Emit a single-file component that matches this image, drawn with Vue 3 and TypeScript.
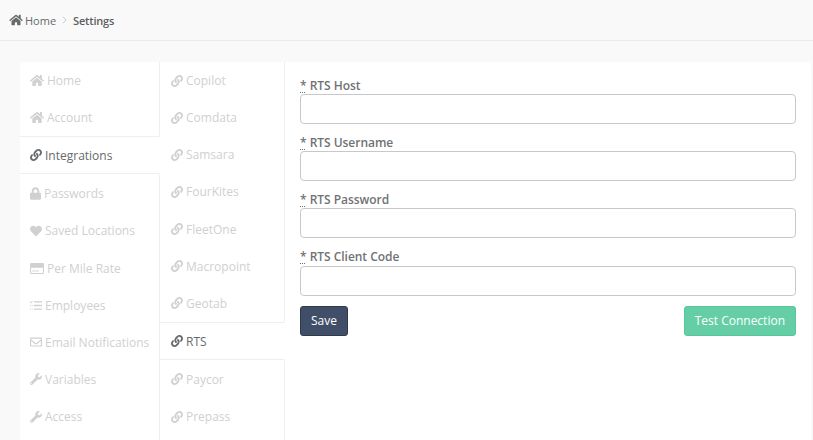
<script setup lang="ts">
type IconName = 'home' | 'link' | 'lock' | 'heart' | 'card' | 'tasks' | 'envelope' | 'wrench'
interface Tab { label: string; icon: IconName; active?: boolean }

const icons: Record<IconName, { box: string; d: string }> = {
  home: { box: '0 0 576 512', d: 'M280.37 148.26L96 300.11V464a16 16 0 0 0 16 16l112.06-.29a16 16 0 0 0 15.92-16V368a16 16 0 0 1 16-16h64a16 16 0 0 1 16 16v95.64a16 16 0 0 0 16 16.05L464 480a16 16 0 0 0 16-16V300L295.67 148.26a12.19 12.19 0 0 0-15.3 0zM571.6 251.47L488 182.56V44.05a12 12 0 0 0-12-12h-56a12 12 0 0 0-12 12v72.61L318.47 43a48 48 0 0 0-61 0L4.34 251.47a12 12 0 0 0-1.6 16.9l25.5 31A12 12 0 0 0 45.15 301l235.22-193.74a12.19 12.19 0 0 1 15.3 0L530.9 301a12 12 0 0 0 16.9-1.6l25.5-31a12 12 0 0 0-1.7-16.93z' },
  link: { box: '0 0 512 512', d: 'M326.612 185.391c59.747 59.809 58.927 155.698.36 214.59-.11.12-.24.25-.36.37l-67.2 67.2c-59.27 59.27-155.699 59.262-214.96 0-59.27-59.26-59.27-155.7 0-214.96l37.106-37.106c9.84-9.84 26.786-3.3 27.294 10.606.648 17.722 3.826 35.527 9.69 52.721 1.986 5.822.567 12.262-3.783 16.612l-13.087 13.087c-28.026 28.026-28.905 73.66-1.155 101.96 28.024 28.579 74.086 28.749 102.325.51l67.2-67.19c28.191-28.191 28.073-73.757 0-101.83-3.701-3.694-7.429-6.564-10.341-8.569a16.037 16.037 0 0 1-6.947-12.606c-.396-10.567 3.348-21.456 11.698-29.806l21.054-21.055c5.521-5.521 14.182-6.199 20.584-1.731a152.482 152.482 0 0 1 20.522 17.197zM467.547 44.449c-59.261-59.262-155.69-59.27-214.96 0l-67.2 67.2c-.12.12-.25.25-.36.37-58.566 58.892-59.387 154.781.36 214.59a152.454 152.454 0 0 0 20.521 17.196c6.402 4.468 15.064 3.789 20.584-1.731l21.054-21.055c8.35-8.35 12.094-19.239 11.698-29.806a16.037 16.037 0 0 0-6.947-12.606c-2.912-2.005-6.64-4.875-10.341-8.569-28.073-28.073-28.191-73.639 0-101.83l67.2-67.19c28.239-28.239 74.3-28.069 102.325.51 27.75 28.3 26.872 73.934-1.155 101.96l-13.087 13.087c-4.35 4.35-5.769 10.79-3.783 16.612 5.864 17.194 9.042 34.999 9.69 52.721.509 13.906 17.454 20.446 27.294 10.606l37.106-37.106c59.271-59.259 59.271-155.699.001-214.959z' },
  lock: { box: '0 0 448 512', d: 'M400 224h-24v-72C376 68.2 307.8 0 224 0S72 68.2 72 152v72H48c-26.5 0-48 21.5-48 48v192c0 26.5 21.5 48 48 48h352c26.5 0 48-21.5 48-48V272c0-26.5-21.5-48-48-48zm-104 0H152v-72c0-39.7 32.3-72 72-72s72 32.3 72 72v72z' },
  heart: { box: '0 0 512 512', d: 'M462.3 62.6C407.5 15.9 326 24.3 275.7 76.2L256 96.5l-19.7-20.3C186.1 24.3 104.5 15.9 49.7 62.6c-62.8 53.6-66.1 149.8-9.9 207.9l193.5 199.8c12.5 12.9 32.8 12.9 45.3 0l193.5-199.8c56.3-58.1 53-154.3-9.8-207.9z' },
  card: { box: '0 0 576 512', d: 'M48 32C21.5 32 0 53.5 0 80v352c0 26.5 21.5 48 48 48h480c26.5 0 48-21.5 48-48V80c0-26.5-21.5-48-48-48zM44 220h488v204a12 12 0 0 1-12 12H56a12 12 0 0 1-12-12zM96 340v44h96v-44zM224 340v44h128v-44z' },
  tasks: { box: '0 0 512 512', d: 'M170 76h342v56H170zM170 228h342v56H170zM170 380h342v56H170zM14 86l26 26 58-64 28 24-84 94-52-52zM10 232h40v44H10zM78 232h40v44H78zM10 380h40v44H10zM78 380h40v44H78z' },
  envelope: { box: '0 0 512 512', d: 'M464 64H48C21.5 64 0 85.5 0 112v288c0 26.5 21.5 48 48 48h416c26.5 0 48-21.5 48-48V112c0-26.5-21.5-48-48-48zM48 112h416v41c-22 18-58 47-136 108-17 14-51 47-72 47s-55-33-72-47C106 200 70 171 48 153zM48 400V215c23 18 55 44 105 83 22 18 61 58 103 58s81-40 103-57c50-40 82-66 105-84v185z' },
  wrench: { box: '0 0 512 512', d: 'M507.73 109.1c-2.24-9.03-13.54-12.09-20.12-5.51l-74.36 74.36-67.88-11.31-11.31-67.88 74.36-74.36c6.62-6.62 3.43-17.9-5.66-20.16-47.38-11.74-99.55.91-136.58 37.93-39.64 39.64-50.55 97.1-34.05 147.2L18.74 402.76c-24.99 24.99-24.99 65.51 0 90.5 24.99 24.99 65.51 24.99 90.5 0l213.21-213.21c50.12 16.71 107.47 5.68 147.37-34.22 37.07-37.07 49.7-89.32 37.91-136.73zM64 472c-13.25 0-24-10.75-24-24 0-13.26 10.75-24 24-24s24 10.74 24 24c0 13.25-10.75 24-24 24z' },
}

const primary: Tab[] = [
  { label: 'Home', icon: 'home' },
  { label: 'Account', icon: 'home' },
  { label: 'Integrations', icon: 'link', active: true },
  { label: 'Passwords', icon: 'lock' },
  { label: 'Saved Locations', icon: 'heart' },
  { label: 'Per Mile Rate', icon: 'card' },
  { label: 'Employees', icon: 'tasks' },
  { label: 'Email Notifications', icon: 'envelope' },
  { label: 'Variables', icon: 'wrench' },
  { label: 'Access', icon: 'wrench' },
]
const secondary: Tab[] = [
  'Copilot', 'Comdata', 'Samsara', 'FourKites', 'FleetOne', 'Macropoint', 'Geotab', 'RTS', 'Paycor', 'Prepass',
].map((label) => ({ label, icon: 'link' as IconName, active: label === 'RTS' }))
const fields = ['RTS Host', 'RTS Username', 'RTS Password', 'RTS Client Code']

function rowClass(list: Tab[], i: number) {
  return {
    active: list[i].active,
    'before-active': list[i + 1]?.active,
    'after-active': list[i - 1]?.active,
  }
}
</script>

<template>
  <div class="page">
    <header class="crumbs">
      <svg class="crumb-icon" :viewBox="icons.home.box"><path :d="icons.home.d" /></svg>
      <span class="crumb">Home</span>
      <svg class="chev" viewBox="0 0 6 10"><path d="M1 1l4 4-4 4" /></svg>
      <strong class="current">Settings</strong>
    </header>
    <main class="card">
      <ul class="tabs first">
        <li v-for="(t, i) in primary" :key="t.label" class="tab" :class="rowClass(primary, i)">
          <svg class="icon" :class="'icon-' + t.icon" :viewBox="icons[t.icon].box"><path fill-rule="evenodd" :d="icons[t.icon].d" /></svg>
          <span>{{ t.label }}</span>
        </li>
      </ul>
      <ul class="tabs second">
        <li v-for="(t, i) in secondary" :key="t.label" class="tab" :class="rowClass(secondary, i)">
          <svg class="icon" :class="'icon-' + t.icon" :viewBox="icons[t.icon].box"><path fill-rule="evenodd" :d="icons[t.icon].d" /></svg>
          <span>{{ t.label }}</span>
        </li>
      </ul>
      <form class="form" @submit.prevent>
        <div v-for="f in fields" :key="f" class="field">
          <label class="label"><abbr class="req">*</abbr> {{ f }}</label>
          <input class="input" type="text" />
        </div>
        <div class="actions">
          <button class="btn save" type="button">Save</button>
          <button class="btn test" type="button">Test Connection</button>
        </div>
      </form>
    </main>
  </div>
</template>

<style>
html, body { margin: 0; height: 100%; overflow: hidden; background: #f9f9f9; }
</style>

<style scoped>
.page { font-family: "Open Sans", "Noto Sans", sans-serif; font-size: 12px; color: #676a6c; height: 440px; overflow: hidden; }
.crumbs { height: 40px; border-bottom: 1px solid #ececec; display: flex; align-items: center; padding-left: 9px; font-size: 11px; }
.crumb-icon { width: 14px; height: 12px; fill: #676a6c; margin-right: 2px; }
.chev { width: 5px; height: 8px; margin: 0 6px; fill: none; stroke: #bbb; stroke-width: 1; }
.current { font-weight: 600; color: #5c5f61; letter-spacing: -0.2px; }
.card { margin: 21px 2px 0 20px; background: #fff; border-radius: 4px 4px 0 0; display: flex; height: 400px; }
.tabs { list-style: none; margin: 0; padding: 0; flex: none; display: flex; flex-direction: column; }
.tabs::after { content: ""; flex: 1; border-right: 1px solid #eee; }
.first { width: 140px; }
.second { width: 125px; }
.tab { box-sizing: border-box; height: 37.14px; flex: none; display: flex; align-items: center; gap: 3px; padding-left: 10px; color: #cfd0d1; border-right: 1px solid #eee; white-space: nowrap; }
.second .tab { padding-left: 11px; }
.tab.active { color: #676a6c; border-right-color: transparent; border-top: 1px solid #eee; border-bottom: 1px solid #eee; height: 38px; }
.second .tab.active { padding-top: 1px; }
.tab.before-active { border-bottom-right-radius: 2px; }
.tab.after-active { border-top-right-radius: 2px; height: 38.14px; padding-top: 1px; }
.icon { width: 12px; height: 12px; fill: currentColor; flex: none; }
.icon-home, .icon-card { width: 14px; height: 13px; }
.icon-lock { width: 11px; height: 13px; }
.icon-tasks { width: 12px; height: 13px; }
.form { flex: 1; padding: 14px 15px 0 15px; min-width: 0; }
.field { margin-bottom: 9px; height: 48.2px; }
.label { display: block; box-sizing: border-box; height: 18px; padding-top: 0.7px; font-weight: 600; line-height: 17.3px; color: #6f7274; letter-spacing: -0.03px; }
.req { text-decoration: underline dotted; text-underline-offset: 2px; }
.input { display: block; box-sizing: border-box; width: 100%; height: 30px; border: 1px solid #c8c8c8; border-radius: 4px; background: #fff; outline: none; }
.actions { display: flex; justify-content: space-between; margin-top: 10px; }
.btn { font-family: inherit; font-size: 12px; height: 30px; border-radius: 3px; padding: 0 10px; cursor: pointer; }
.save { background: #404e67; border: 1px solid #2f3a4d; color: #fff; }
.test { background: #65cea7; border: 1px solid #55c79d; color: #fff; }
</style>
